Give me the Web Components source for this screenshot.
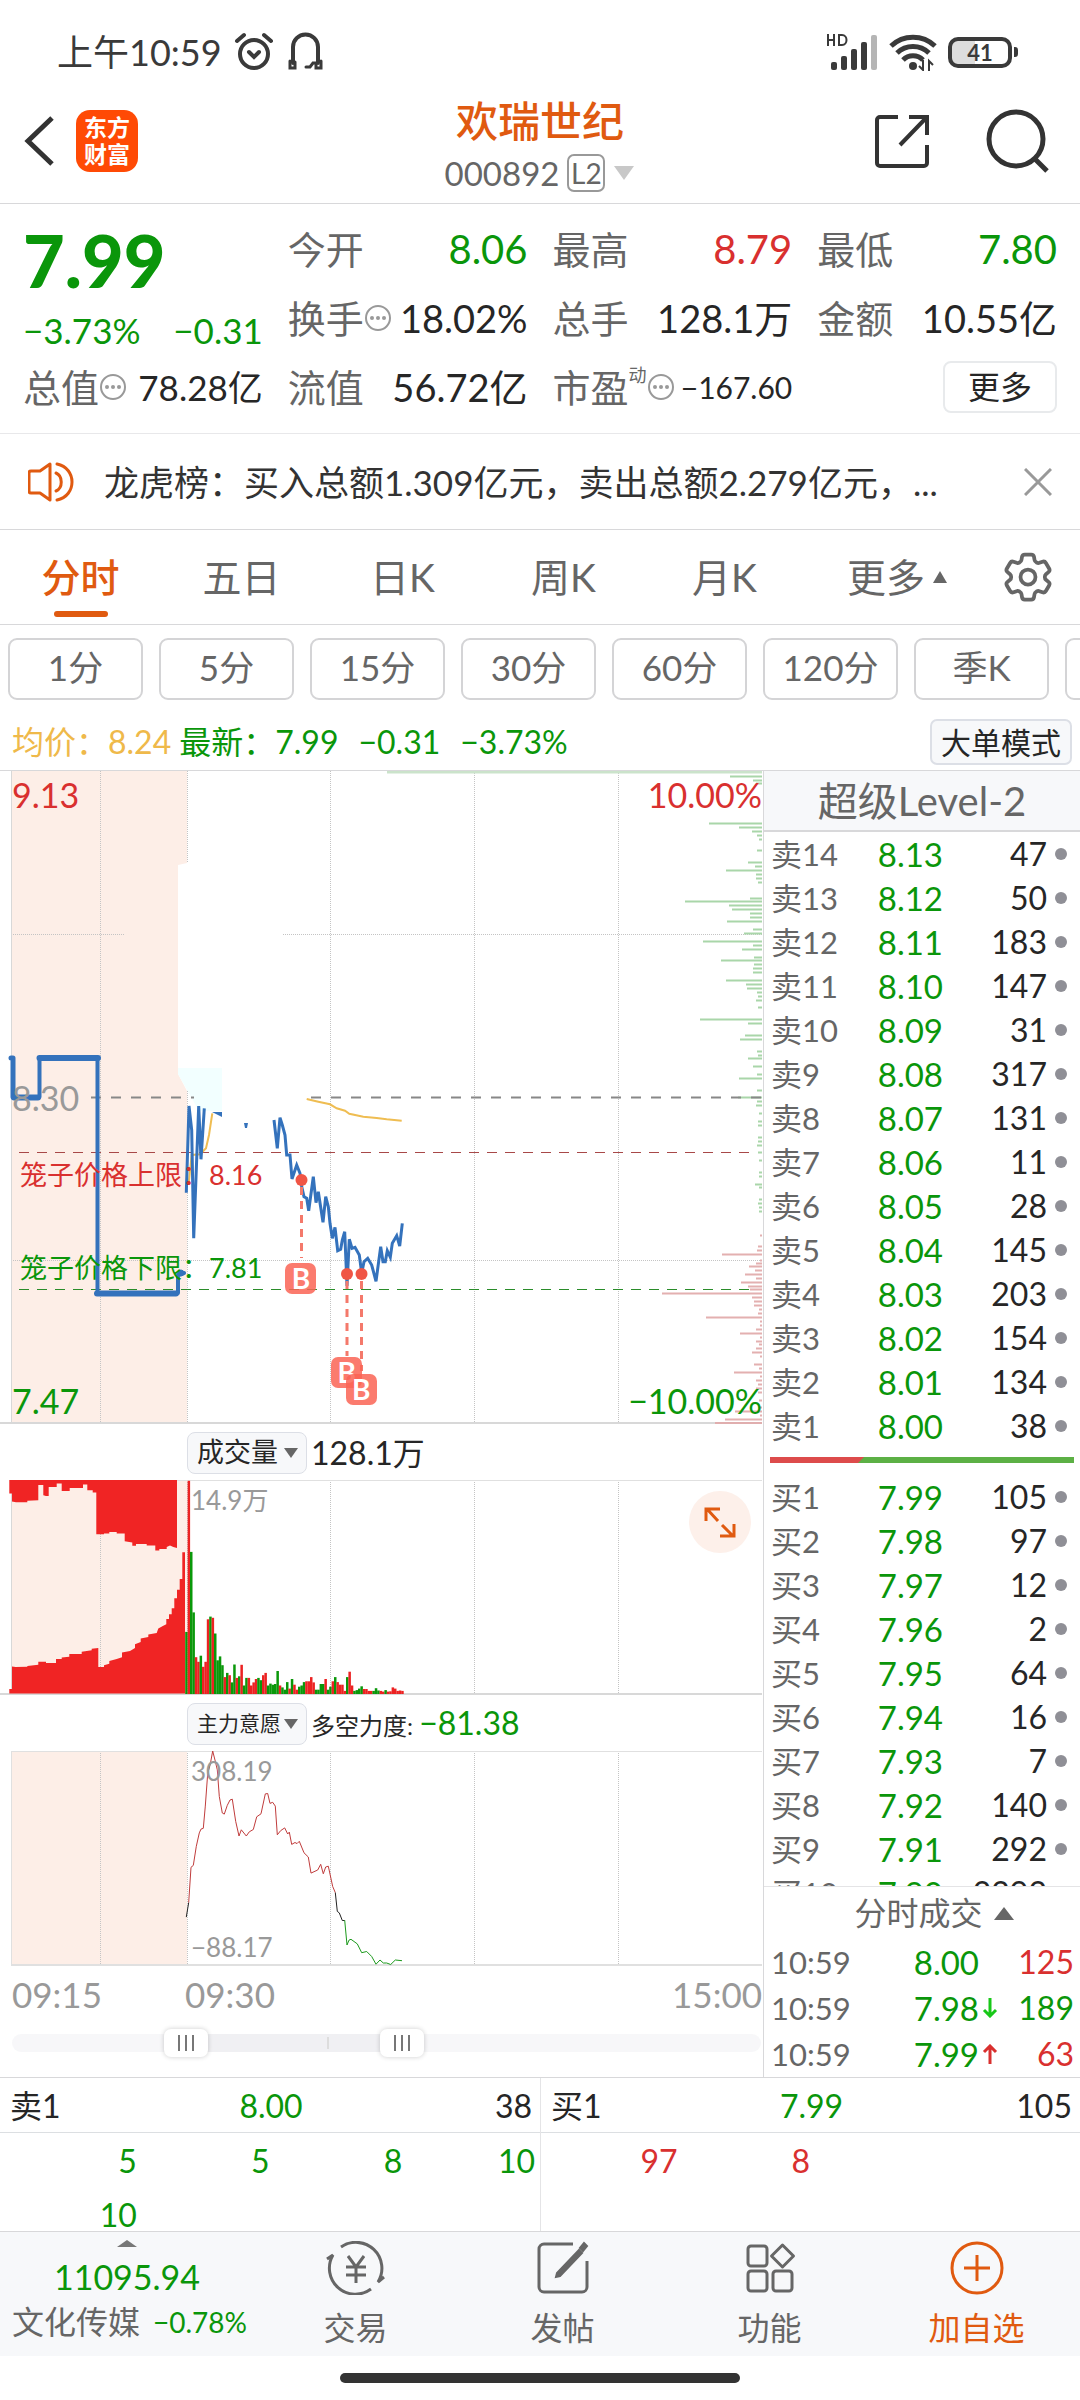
<!DOCTYPE html>
<html lang="zh-CN">
<head>
<meta charset="utf-8">
<meta name="viewport" content="width=device-width, initial-scale=1">
<title>欢瑞世纪 000892</title>
<style>
  :root {
    --green: #0a960a;
    --red: #d9302f;
    --orange: #e05a10;
    --text: #262626;
    --gray: #666;
    --light: #999;
    --line: #d8d8da;
    --panel: #f7f8fa;
  }
  body {
    margin: 0;
    background: #fff;
    color: var(--text);
    font-family: Lato, "Noto Sans CJK SC", sans-serif;
    font-size: 32px;
    line-height: 44px;
  }
</style>
</head>
<body>
<stock-page></stock-page>

<script>
const BASE_CSS = `
  * { box-sizing: border-box; }
  :host { display: block; }
  button, select { font: inherit; color: inherit; background: none; border: 0; margin: 0; padding: 0; }
  a { color: inherit; text-decoration: none; }
  svg { display: block; }
  table { border-collapse: collapse; width: 100%; }
  td, th { padding: 0; font-weight: normal; }
  .green { color: var(--green); }
  .red { color: var(--red); }
`;

class BaseElement extends HTMLElement {
  constructor() {
    super();
    this.attachShadow({ mode: "open" });
    this.shadowRoot.innerHTML = `<style>${BASE_CSS}${this.css()}</style>${this.html()}`;
  }
  css() {
    return "";
  }
  html() {
    return "<slot></slot>";
  }
}

// Points are stored in drawing units and scaled into the panel.
const toPoints = (data, sx, sy, oy) =>
  data
    .trim()
    .split(/\s+/)
    .map((p) => p.split(",").map(Number))
    .map(([x, y]) => `${(x * sx).toFixed(1)},${(y * sy + oy).toFixed(1)}`)
    .join(" ");

customElements.define("status-bar", class extends BaseElement {
  css() {
    return `
      :host { display: flex; align-items: center; height: 80px; padding: 24px 62px 0 57px; color: #3a3a3a; font-size: 36px; }
      .left, .right { display: flex; align-items: center; }
      .left { gap: 12px; flex: 1; }
      .right { gap: 11px; }
      .battery { display: flex; align-items: center; gap: 2px; }
      .cell { width: 64px; height: 31px; border: 4px solid #3a3a3a; border-radius: 10px; font-size: 22px; line-height: 24px; text-align: center; font-weight: bold;
        background: linear-gradient(90deg, #ddd 41%, #fff 41%); }
      .tip { width: 4px; height: 10px; border-radius: 0 3px 3px 0; background: #3a3a3a; }
    `;
  }
  html() {
    return `
      <div class="left">
        <span>上午10:59</span>
        <svg width="40" height="40" viewBox="0 0 40 40" fill="none" stroke="currentColor" stroke-width="4" stroke-linecap="round">
          <circle cx="20" cy="22" r="14"/><path d="M3 9l7-6M37 9l-7-6"/><path d="M15 20l5 5 5-5"/>
        </svg>
        <svg width="40" height="40" viewBox="0 0 40 40" fill="none" stroke="currentColor" stroke-width="4" stroke-linecap="round">
          <path d="M7 31V15a12 12 0 0 1 25 0v16"/><path d="M4 29v7h5v-6M35 29v7h-5v-5h-3l-3 4h-4" stroke-width="3"/>
        </svg>
      </div>
      <div class="right">
        <svg width="52" height="38" viewBox="0 0 52 38">
          <g fill="none" stroke="#3a3a3a" stroke-width="2"><path d="M2 1v12M8 1v12M2 7h6M13 2v10h3c6 0 6-10 0-10z"/></g>
          <g fill="#3a3a3a"><rect x="5" y="29" width="6" height="8" rx="2"/><rect x="15" y="23" width="6" height="14" rx="2"/><rect x="25" y="16" width="6" height="21" rx="2"/><rect x="35" y="9" width="6" height="28" rx="2"/></g>
          <rect x="45" y="2" width="6" height="35" rx="2" fill="#b5b5b5"/>
        </svg>
        <svg width="48" height="38" viewBox="0 0 48 38" fill="none" stroke="#3a3a3a" stroke-width="5">
          <path d="M2 13a32 32 0 0 1 44 0"/><path d="M8 20a23 23 0 0 1 32 0"/><path d="M14 27a14 14 0 0 1 20 0"/>
          <circle cx="24" cy="33" r="4" fill="#3a3a3a" stroke="none"/>
          <path d="M34 27v10l-4-4M40 38V28l4 4" stroke-width="2"/>
        </svg>
        <div class="battery"><div class="cell">41</div><div class="tip"></div></div>
      </div>`;
  }
});

customElements.define("stock-header", class extends BaseElement {
  css() {
    return `
      :host { display: grid; grid-template-columns: 1fr auto 1fr; height: 124px; padding-top: 13px; border-bottom: 1px solid var(--line); }
      .side { display: flex; align-items: center; height: 96px; }
      .left { gap: 18px; padding-left: 20px; }
      .end { justify-content: flex-end; gap: 56px; padding-right: 30px; color: #333; }
      .logo { width: 62px; height: 62px; border-radius: 14px; background: #ff4a05; color: #fff; font-size: 23px; font-weight: bold; line-height: 27px; text-align: center; padding: 4px 0; }
      .mid { text-align: center; }
      h1 { margin: 0; font-size: 42px; line-height: 56px; font-weight: 500; color: var(--orange); }
      .code { display: flex; align-items: center; justify-content: center; gap: 8px; height: 48px; color: var(--gray); font-size: 33px; }
      .l2 { border: 2px solid #999; border-radius: 7px; width: 38px; height: 38px; font-size: 28px; line-height: 34px; }
    `;
  }
  html() {
    return `
      <div class="side left">
        <button aria-label="返回"><svg width="38" height="54" viewBox="0 0 38 54" fill="none" stroke="#333" stroke-width="5"><path d="M32 4L8 27l24 23"/></svg></button>
        <div class="logo">东方<br>财富</div>
      </div>
      <div class="mid">
        <h1>欢瑞世纪</h1>
        <div class="code"><span>000892</span><span class="l2">L2</span>
          <svg width="22" height="14" viewBox="0 0 22 14"><path d="M1 0h20L11 14z" fill="#c8c8c8"/></svg></div>
      </div>
      <div class="side end">
        <button aria-label="分享"><svg width="56" height="56" viewBox="0 0 56 56" fill="none" stroke="currentColor" stroke-width="4"><path d="M24 4H6a3 3 0 0 0-3 3v43a3 3 0 0 0 3 3h44a3 3 0 0 0 3-3V32"/><path d="M26 32L53 4M35 4h18v18"/></svg></button>
        <button aria-label="搜索"><svg width="64" height="64" viewBox="0 0 64 64" fill="none" stroke="currentColor" stroke-width="5"><circle cx="30" cy="30" r="27"/><path d="M49 50l12 12"/></svg></button>
      </div>`;
  }
});

const DOTS = `<svg width="28" height="28" viewBox="0 0 28 28" fill="none" stroke="#999" stroke-width="2"><circle cx="14" cy="14" r="12"/><g fill="#999" stroke="none"><circle cx="8" cy="14" r="2"/><circle cx="14" cy="14" r="2"/><circle cx="20" cy="14" r="2"/></g></svg>`;

customElements.define("quote-field", class extends BaseElement {
  css() {
    return `
      :host { display: flex; align-items: center; justify-content: space-between; height: 69px; white-space: nowrap; }
      .label { display: flex; align-items: center; color: var(--gray); font-size: 38px; }
      sup { font-size: 18px; line-height: 20px; align-self: flex-start; }
      .value { font-size: 40px; }
      :host([size="m"]) .value { font-size: 38px; }
      :host([size="s"]) .value { font-size: 35px; }
      :host([size="xs"]) .value { font-size: 30px; }
    `;
  }
  html() {
    const tone = this.getAttribute("tone") || "";
    const sup = this.getAttribute("sup");
    return `
      <span class="label">${this.getAttribute("label")}${sup ? `<sup>${sup}</sup>` : ""}${this.hasAttribute("info") ? DOTS : ""}</span>
      <span class="value ${tone}"><slot></slot></span>`;
  }
});

customElements.define("quote-summary", class extends BaseElement {
  css() {
    return `
      :host { display: grid; grid-template-columns: repeat(4, 1fr); column-gap: 25px; height: 230px; padding: 10px 23px 12px; border-bottom: 1px solid #e8e8ea; align-content: start; }
      .price { grid-row: span 2; height: 138px; color: var(--green); }
      .price strong { display: block; font-size: 72px; line-height: 72px; padding-top: 10px; font-weight: 900; }
      .change { display: flex; justify-content: space-between; font-size: 35px; line-height: 68px; }
      .more { display: flex; align-items: center; justify-content: flex-end; }
      .more button { width: 114px; height: 52px; border: 2px solid #e8eaec; border-radius: 8px; line-height: 44px; }
    `;
  }
  html() {
    return `
      <div class="price"><strong>7.99</strong><div class="change"><span>−3.73%</span><span>−0.31</span></div></div>
      <quote-field label="今开" tone="green">8.06</quote-field>
      <quote-field label="最高" tone="red">8.79</quote-field>
      <quote-field label="最低" tone="green">7.80</quote-field>
      <quote-field label="换手" info size="m">18.02%</quote-field>
      <quote-field label="总手" size="m">128.1万</quote-field>
      <quote-field label="金额" size="m">10.55亿</quote-field>
      <quote-field label="总值" info size="s">78.28亿</quote-field>
      <quote-field label="流值" size="m">56.72亿</quote-field>
      <quote-field label="市盈" sup="动" info size="xs">−167.60</quote-field>
      <div class="more"><button>更多</button></div>`;
  }
});

customElements.define("notice-bar", class extends BaseElement {
  css() {
    return `
      :host { display: flex; align-items: center; height: 96px; padding: 0 28px; border-bottom: 1px solid var(--line); font-size: 35px; color: #333; }
      .text { flex: 1; padding-left: 28px; white-space: nowrap; overflow: hidden; }
    `;
  }
  html() {
    return `
      <svg width="48" height="42" viewBox="0 0 48 42" fill="none" stroke="#e05a10" stroke-width="3" stroke-linejoin="round"><path d="M22 3v36l-10-7H3a2 2 0 0 1-2-2V12a2 2 0 0 1 2-2h9z"/><path d="M28 12c7 3 7 15 0 18M29 3c20 4 20 32 0 36" stroke-linecap="round"/></svg>
      <div class="text"><slot></slot></div>
      <button aria-label="关闭"><svg width="28" height="28" viewBox="0 0 28 28" stroke="#999" stroke-width="3"><path d="M1 1l26 26M27 1L1 27"/></svg></button>`;
  }
});

customElements.define("period-tabs", class extends BaseElement {
  css() {
    return `
      :host { display: grid; grid-template-columns: repeat(5, 161fr) 170fr 105fr; height: 95px; border-bottom: 1px solid var(--line); color: var(--gray); }
      button { display: flex; align-items: center; justify-content: center; gap: 8px; font-size: 39px; position: relative; }
      button.more { padding-left: 14px; }
      button[aria-selected] { color: var(--orange); font-weight: 500; }
      button[aria-selected]::after { content: ""; position: absolute; bottom: 7px; left: calc(50% - 27px); width: 54px; height: 6px; border-radius: 3px; background: var(--orange); }
    `;
  }
  html() {
    const tabs = ["分时", "五日", "日K", "周K", "月K"];
    return `
      ${tabs.map((t, i) => `<button ${i ? "" : 'aria-selected="true"'}>${t}</button>`).join("")}
      <button class="more">更多<svg width="14" height="12" viewBox="0 0 14 12"><path d="M7 0l7 12H0z" fill="#666"/></svg></button>
      <button aria-label="设置"><svg width="60" height="60" viewBox="0 0 24 24" fill="none" stroke="#666" stroke-width="1.5"><path d="M9.594 3.94c.09-.542.56-.94 1.11-.94h2.593c.55 0 1.02.398 1.11.94l.213 1.281c.063.374.313.686.645.87.074.04.147.083.22.127.325.196.72.257 1.075.124l1.217-.456a1.125 1.125 0 0 1 1.37.49l1.296 2.247a1.125 1.125 0 0 1-.26 1.431l-1.003.827c-.293.241-.438.613-.43.992a7.723 7.723 0 0 1 0 .255c-.008.378.137.75.43.991l1.004.827c.424.35.534.955.26 1.43l-1.298 2.247a1.125 1.125 0 0 1-1.369.491l-1.217-.456c-.355-.133-.75-.072-1.076.124a6.47 6.47 0 0 1-.22.128c-.331.183-.581.495-.644.869l-.213 1.281c-.09.543-.56.94-1.11.94h-2.594c-.55 0-1.019-.398-1.11-.94l-.213-1.281c-.062-.374-.312-.686-.644-.87a6.52 6.52 0 0 1-.22-.127c-.325-.196-.72-.257-1.076-.124l-1.217.456a1.125 1.125 0 0 1-1.369-.49l-1.297-2.247a1.125 1.125 0 0 1 .26-1.431l1.004-.827c.292-.24.437-.613.43-.991a6.932 6.932 0 0 1 0-.255c.007-.38-.138-.751-.43-.992l-1.004-.827a1.125 1.125 0 0 1-.26-1.43l1.297-2.247a1.125 1.125 0 0 1 1.37-.491l1.216.456c.356.133.751.072 1.076-.124.072-.044.146-.086.22-.128.332-.183.582-.495.644-.869l.214-1.28Z"/><circle cx="12" cy="12" r="3"/></svg></button>`;
  }
});

customElements.define("minute-chips", class extends BaseElement {
  css() {
    return `
      :host { display: flex; gap: 16px; padding: 13px 0 0 8px; overflow: hidden; color: var(--gray); }
      button { flex: none; width: 135px; height: 62px; border: 2px solid #d4d4d6; border-radius: 9px; padding-bottom: 3px; font-size: 35px; line-height: 55px; white-space: nowrap; }
    `;
  }
  html() {
    return ["1分", "5分", "15分", "30分", "60分", "120分", "季K", "年K"].map((t) => `<button>${t}</button>`).join("");
  }
});

customElements.define("chart-legend", class extends BaseElement {
  css() {
    return `
      :host { display: flex; align-items: center; height: 70px; padding: 14px 8px 0 12px; white-space: nowrap; }
      .avg { color: #efb94a; margin-right: 8px; }
      .last { display: flex; gap: 20px; color: var(--green); flex: 1; }
      button { width: 142px; height: 46px; border: 2px solid #dcdfe6; border-radius: 7px; background: var(--panel); font-size: 30px; line-height: 40px; }
    `;
  }
  html() {
    return `
      <span class="avg">均价：8.24</span>
      <span class="last"><span>最新：7.99</span><span>−0.31</span><span>−3.73%</span></span>
      <button>大单模式</button>`;
  }
});

const GRID_X = [330.5, 474.5, 618.5];

// Depth profile at the right edge: "y,left" pairs.
const DEPTH_SELL = `776,730 780,753 783,756 823,709 827,739 831,752 835,757 839,759 850,757 862,748 866,755 870,726 874,756 878,756 882,758
  898,750 901,685 905,729 909,732 913,750 917,750 921,727 929,753 933,744 941,703 945,753 949,742 957,754 960,721 964,754 968,753 972,753
  980,726 984,746 988,747 992,757 996,758 1000,756 1007,758 1019,700 1023,748 1035,745 1039,740 1051,757 1055,758 1058,748 1066,753 1074,757
  1078,739 1090,757 1097,738 1101,757 1105,756 1113,759 1121,758 1125,758 1137,758 1141,758 1145,757 1152,758 1160,759 1172,759 1176,759
  1184,755 1187,759 1199,759 1203,758 1207,759 1211,759`;
const DEPTH_BUY = `1235,760 1246,758 1250,757 1254,722 1260,760 1263,756 1266,749 1270,755 1274,745 1278,756 1282,741 1286,748 1289,750 1293,662
  1297,752 1301,754 1305,754 1309,759 1313,758 1317,706 1321,760 1325,760 1329,756 1333,740 1337,760 1341,756 1344,759 1348,756 1352,752
  1356,760 1364,754 1368,759 1372,734 1376,760 1380,756 1384,758 1388,756 1392,758 1400,759 1407,758 1411,735 1415,760 1419,725`;

const depthLines = (data) =>
  data.trim().split(/\s+/).map((p) => p.split(",")).map(([y, x]) => `M${x} ${y - 770.5}H762`).join("");

const PRICE = `822,240 832,325 840,233 847,255 855,285 860,345 870,345 876,417 890,375 900,400 905,440 912,470 920,475 926,512 940,410 948,488 955,455
  969,547 977,470 985,500 990,550 997,595 1005,562 1013,632 1022,628 1027,600 1034,575 1041,738 1048,598 1056,625 1065,622 1078,645 1085,700
  1092,665 1103,655 1115,675 1128,724 1142,620 1149,665 1156,665 1162,632 1171,652 1177,610 1190,587 1199,618 1207,550`;

customElements.define("price-chart", class extends BaseElement {
  css() {
    return `
      :host { position: relative; height: 653px; }
      svg { width: 100%; height: 100%; }
      span { position: absolute; font-size: 34px; line-height: 40px; }
      .l { left: 12px; }
      .r { right: 1px; }
      .top { top: 4px; }
      .bottom { bottom: 3px; }
      .mid { top: 307px; color: var(--light); }
      .cage { left: 20px; font-size: 27px; white-space: nowrap; }
      .up { top: 384px; }
      .down { top: 477px; }
      .mark { width: 31px; height: 31px; border-radius: 7px; background: rgba(250, 100, 85, 0.85); color: #fff; font-size: 28px; line-height: 31px; font-weight: bold; text-align: center; }
    `;
  }
  html() {
    return `
      <svg viewBox="0 0 763 653" preserveAspectRatio="none" fill="none">
        <path d="M11 0H187V92L178 94V303L187 320V652H11z" fill="#fdeee7"/>
        <path d="M178 297H222V340H199L178 303z" fill="#f2ffff"/>
        <path d="M100.500 0V652M187.500 0V92M187.500 320V652${GRID_X.map((x) => `M${x} 0V652`).join("")}M11 163.500H125M283 163.500H762M11 489.500H762" stroke="#c4c4c4" stroke-dasharray="1 1"/>
        <path d="M11.500 0V652" stroke="#d8d8d8"/>
        <path d="M0 652H762" stroke="#d8d8d8" stroke-width="2"/>
        <path d="M387 1H762" stroke="#cbe3cb" stroke-width="3"/>
        <path d="${depthLines(DEPTH_SELL)}" stroke="#a9d6a9" stroke-width="2"/>
        <path d="${depthLines(DEPTH_BUY)}" stroke="#e3b0b0" stroke-width="2"/>
        <path d="M715 652H762" stroke="#e0aeae" stroke-width="2"/>
        <path d="M91 326.500H194M311 326.500H762" stroke="#888" stroke-width="2" stroke-dasharray="10 10"/>
        <path d="M19 381.500H750" stroke="#a84848" stroke-width="1" stroke-dasharray="10 8"/>
        <path d="M19 518.500H750" stroke="#2a8c2a" stroke-width="1" stroke-dasharray="10 8"/>
        <g stroke="#efbd52" stroke-width="2">
          <polyline points="${toPoints("566,430 575,345 600,343 618,325 627,285 637,220", 1 / 3, 1 / 3, 269)}"/>
          <polyline points="${toPoints("920,177 955,185 990,193 1010,205 1035,212 1048,221 1090,230 1130,234 1160,238 1205,242", 1 / 3, 1 / 3, 269)}"/>
        </g>
        <g stroke="#3472bc" stroke-linejoin="round" stroke-linecap="round">
          <path d="M11 287h2v39" stroke-width="5"/>
          <path d="M14 326.500H38M39.500 287H98M97 522.500H176" stroke-width="6"/>
          <path d="M39.500 326V287M97.500 287V522M178 522V504L184 502" stroke-width="4"/>
          <circle cx="181" cy="502" r="3" fill="#3472bc"/>
        </g>
        <g stroke="#3472bc" stroke-width="3">
          <polyline points="${toPoints("559,458 567,198 575,270 581,595 596,198 603,358 613,205", 1 / 3, 1 / 3, 269)}"/>
          <polyline points="${toPoints(PRICE, 1 / 3, 1 / 3, 269)}"/>
          <path d="M212 341H222V346zM244 352h4l-1 5h-2z" fill="#3472bc" stroke="none"/>
        </g>
        <path d="M301.500 416V487M347 510V585M361.500 510V600" stroke="#f4796b" stroke-width="3" stroke-dasharray="8 6"/>
        <g fill="#f05545"><circle cx="301.500" cy="409" r="6"/><circle cx="347" cy="503" r="6"/><circle cx="361.500" cy="503" r="6"/></g>
      </svg>
      <span class="l top red">9.13</span><span class="r top red">10.00%</span>
      <span class="l mid">8.30</span>
      <span class="l bottom green">7.47</span><span class="r bottom green">−10.00%</span>
      <span class="cage up red">笼子价格上限：8.16</span>
      <span class="cage down green">笼子价格下限：7.81</span>
      <span class="mark" style="left: 37.4%; top: 492px">B</span>
      <span class="mark" style="left: 43.4%; top: 586px">B</span>
      <span class="mark" style="left: 45.3%; top: 603px">B</span>`;
  }
});

customElements.define("indicator-head", class extends BaseElement {
  css() {
    return `
      :host { display: flex; align-items: center; height: 56px; padding: 2px 0 0 187px; gap: 4px; white-space: nowrap; }
      label { display: block; position: relative; width: 120px; height: 42px; border: 1px solid #dcdfe6; border-radius: 8px; background: var(--panel); }
      label::after { content: ""; position: absolute; right: 8px; top: 15px; border: 7px solid transparent; border-top: 10px solid #666; border-bottom: 0; pointer-events: none; }
      select { display: block; appearance: none; width: 100%; height: 38px; padding-left: 9px; font-size: 27px; line-height: 38px; outline: none; }
      :host([narrow]) select { font-size: 21px; }
    `;
  }
  html() {
    return `<label><select aria-label="指标"><option>${this.getAttribute("name")}</option></select></label><slot></slot>`;
  }
});

const PRE_TOP = `28,157 28,192 36,192 36,213 48,215 82,215 82,211 115,210 115,170 130,170 130,197 138,199 146,199 146,175 170,175 170,166 185,166 185,186 209,186
  209,178 249,178 249,169 262,169 262,184 278,184 278,190 289,190 289,299 312,299 312,297 328,297 328,293 350,293 350,297 374,297 374,317 397,320 397,329
  408,329 408,324 440,324 440,328 466,328 466,341 478,341 478,337 500,337 500,332 510,328 520,332 531,335 531,157`;
const PRE_BOTTOM = `28,715 28,703 36,703 36,644 47,646 82,645 82,643 115,640 115,632 138,632 138,635 168,635 168,625 185,625 185,621 208,619 208,612 245,612 245,606
  275,602 275,598 295,596 295,646 312,646 312,641 328,637 328,630 350,625 366,620 366,608 390,604 405,596 405,586 422,580 422,571 445,567 445,561 470,557 475,545
  490,538 499,534 499,520 507,520 507,508 515,508 515,492 523,492 523,466 531,466 531,444 539,444 539,416 547,416 547,346 555,346 555,715`;
// One bar per minute from 09:30: colour letter and top edge.
const VOLUME = `g554 r159 g345 g503 r620 r632 g616 r645 r632 r521 g514 r517 g558 g628 g618 g641 r672 g661 r667 g686 g639 r674 g670 r640 g694 g674 r674 r694
  r686 r677 g674 g680 r667 r661 g694 g689 g692 g690 g656 r694 g699 g705 g685 r702 g677 r692 r705 g697 g694 g685 r683 r683 r672 r686 g705 g705 g690 g690
  r677 g705 g697 r683 g672 r685 r692 r692 r708 g672 r658 r694 g708 g706 g702 g696 r703 r703 r708 r708 g708 g701 g707 r708 r710 g706 r710 r709 r699 r702 r708 r707 r708`;

customElements.define("volume-chart", class extends BaseElement {
  css() {
    return `
      :host { position: relative; height: 215px; }
      svg.plot { width: 100%; height: 100%; }
      span { position: absolute; left: 191px; top: 2px; font-size: 26px; line-height: 36px; color: var(--light); }
      button { position: absolute; right: 12px; top: 11px; width: 62px; height: 62px; border-radius: 50%; background: #fdf0ea; display: grid; place-items: center; }
    `;
  }
  html() {
    const k = 1 / 2.613;
    const bars = VOLUME.trim().split(/\s+/).map((b, i) => {
      const y = (b.slice(1) - 157) * k;
      return `<rect x="${(185.2 + i * 2.4).toFixed(1)}" y="${y.toFixed(1)}" width="2.500" height="${(214 - y).toFixed(1)}" fill="${b[0] === "r" ? "#ec2222" : "#0a980a"}"/>`;
    }).join("");
    return `
      <svg class="plot" viewBox="0 0 763 215" preserveAspectRatio="none" fill="none">
        <rect x="11" width="176" height="214" fill="#fdeee7"/>
        <path d="M100.500 0V214M187.500 0V214${GRID_X.map((x) => `M${x} 0V214`).join("")}" stroke="#c4c4c4" stroke-dasharray="1 1"/>
        <path d="M11 .5H762" stroke="#e0e0e0"/>
        <path d="M11.500 0V214" stroke="#d8d8d8"/>
        <path d="M0 214H762" stroke="#d8d8d8" stroke-width="2"/>
        <g fill="#f02424">
          <polygon points="${toPoints(PRE_TOP, 1 / 3, k, -157 * k)}"/>
          <polygon points="${toPoints(PRE_BOTTOM, 1 / 3, k, -157 * k)}"/>
        </g>
        ${bars}
      </svg>
      <span>14.9万</span>
      <button aria-label="全屏"><svg width="32" height="32" viewBox="0 0 32 32" fill="none" stroke="#e05a10" stroke-width="3"><path d="M2 15V3h14M3 3l11 12M30 18v12H16M29 30L18 19"/></svg></button>`;
  }
});

const FORCE_UP = `566,1262 573,1170 580,1165 589,1115 598,1080 603,1070 610,1068 616,1010 623,925 631,900 638,866 646,893 652,915 658,985 667,1028 673,1031 682,1008 690,994 697,992
  707,1050 717,1088 724,1072 739,1088 748,1077 760,1071 770,1038 783,1030 796,978 803,977 810,1003 818,1000 826,1010 832,1085 842,1074 854,1067 863,1083 868,1078 875,1110
  885,1105 891,1108 898,1102 912,1132 925,1143 933,1185 953,1177 962,1162 970,1187 977,1169 985,1167 998,1220 1006,1236`;
const FORCE_DOWN = `1034,1308 1041,1373 1047,1360 1053,1358 1072,1370 1085,1393 1100,1390 1115,1403 1128,1423 1140,1412 1150,1420 1160,1420 1172,1424 1186,1412 1206,1414`;

customElements.define("force-chart", class extends BaseElement {
  css() {
    return `
      :host { position: relative; height: 215px; }
      svg { width: 100%; height: 100%; }
      span { position: absolute; left: 191px; font-size: 26px; line-height: 36px; color: var(--light); }
      .max { top: 2px; }
      .min { bottom: 1px; }
    `;
  }
  html() {
    const k = 1 / 2.613;
    const line = (data, color) => `<polyline points="${toPoints(data, 1 / 3, k, -866 * k)}" stroke="${color}"/>`;
    return `
      <span class="max">308.19</span><span class="min">−88.17</span>
      <svg viewBox="0 0 763 215" preserveAspectRatio="none" fill="none">
        <rect x="11" width="176" height="214" fill="#fdeee7"/>
        <path d="M100.500 0V214M187.500 0V214${GRID_X.map((x) => `M${x} 0V214`).join("")}" stroke="#c4c4c4" stroke-dasharray="1 1"/>
        <path d="M11 .5H762M11.500 0V214" stroke="#e0e0e0"/>
        <path d="M11 214H762" stroke="#e0e0e0" stroke-width="2"/>
        ${line("559,1300 566,1262", "#222")}
        ${line(FORCE_UP, "#c03c3c")}
        ${line("1006,1236 1012,1285 1018,1289 1027,1309 1034,1309", "#222")}
        ${line(FORCE_DOWN, "#1c9a1c")}
      </svg>`;
  }
});

customElements.define("time-range", class extends BaseElement {
  css() {
    return `
      .times { display: grid; grid-template-columns: 173px 1fr auto; padding: 0 1px 0 12px; font-size: 35px; line-height: 56px; color: var(--light); }
      .scrub { display: grid; align-items: center; height: 30px; margin: 6px 2px 19px 12px; }
      .scrub > * { grid-area: 1 / 1; }
      .track { height: 18px; border-radius: 9px; background: linear-gradient(90deg, #f7f7f9 23%, #f0f0f3 23%, #f0f0f3 52%, #f7f7f9 52%); display: flex; align-items: center; }
      .track::after { content: ""; width: 2px; height: 12px; margin-left: 42%; background: #ddd; }
      input { appearance: none; width: 100%; height: 30px; margin: 0; background: none; pointer-events: none; }
      input::-webkit-slider-thumb { appearance: none; pointer-events: auto; width: 44px; height: 28px; border-radius: 7px; box-shadow: 0 0 5px rgba(0, 0, 0, 0.2);
        background: linear-gradient(90deg, #777 2px, transparent 2px 7px, #777 7px 9px, transparent 9px 14px, #777 14px 16px) 14px 6px / 16px 16px no-repeat #fff; }
    `;
  }
  html() {
    return `
      <div class="times"><span>09:15</span><span>09:30</span><span>15:00</span></div>
      <div class="scrub">
        <div class="track"></div>
        <input type="range" min="0" max="1000" value="216" aria-label="开始时间">
        <input type="range" min="0" max="1000" value="522" aria-label="结束时间">
      </div>`;
  }
});

const SELLS = [[14, "8.13", 47], [13, "8.12", 50], [12, "8.11", 183], [11, "8.10", 147], [10, "8.09", 31], [9, "8.08", 317], [8, "8.07", 131],
  [7, "8.06", 11], [6, "8.05", 28], [5, "8.04", 145], [4, "8.03", 203], [3, "8.02", 154], [2, "8.01", 134], [1, "8.00", 38]];
const BUYS = [[1, "7.99", 105], [2, "7.98", 97], [3, "7.97", 12], [4, "7.96", 2], [5, "7.95", 64], [6, "7.94", 16], [7, "7.93", 7],
  [8, "7.92", 140], [9, "7.91", 292], [10, "7.90", 2292]];

customElements.define("order-book", class extends BaseElement {
  css() {
    return `
      :host { display: flex; flex-direction: column; border-left: 1px solid var(--line); min-width: 0; }
      h2 { margin: 0; height: 61px; background: var(--panel); border-bottom: 2px solid var(--line); color: var(--gray); font-size: 40px; line-height: 60px; font-weight: normal; text-align: center; }
      table { table-layout: fixed; }
      tr { height: 44px; }
      th { text-align: left; padding-left: 7px; color: var(--gray); width: 90px; white-space: nowrap; font-size: 31px; }
      td { text-align: right; line-height: 44px; }
      td.price { width: 89px; font-size: 33px; }
      td.dot { width: 33px; }
      td.dot::before { content: ""; display: block; width: 12px; height: 12px; margin-left: 8px; border-radius: 50%; background: #8f8f96; }
      .ratio { flex: none; height: 6px; margin: 9px 6px 12px; background: linear-gradient(135deg, #dd4b4b 66px, #5cb045 67px); }
      .buys { flex: 1 1 0; min-height: 0; overflow: hidden; }
      .deals h3 { margin: 0; height: 53px; padding-left: 24px; border-top: 1px solid #e4e4e6; color: var(--gray); font-size: 32px; line-height: 52px; font-weight: normal; display: flex; justify-content: center; align-items: center; gap: 8px; }
      .deals tr { height: 46px; }
      .deals td.price { width: 125px; }
      .deals td:last-child { padding-right: 6px; }
      .deals td.arrow { width: 20px; }
      .deals svg { margin-left: 3px; }
    `;
  }
  html() {
    const rows = (side, list) =>
      list.map(([n, price, qty]) => `<tr><th scope="row">${side}${n}</th><td class="price green">${price}</td><td>${qty}</td><td class="dot"></td></tr>`).join("");
    const down = `<svg width="16" height="20" viewBox="0 0 16 20" fill="none" stroke="#18c818" stroke-width="3"><path d="M8 0v18M2 12l6 6 6-6"/></svg>`;
    const up = `<svg width="16" height="20" viewBox="0 0 16 20" fill="none" stroke="#d9302f" stroke-width="3"><path d="M8 20V2M2 8l6-6 6 6"/></svg>`;
    const deal = (price, arrow, qty, tone) =>
      `<tr><th scope="row">10:59</th><td class="price green">${price}</td><td class="arrow">${arrow}</td><td class="${tone}">${qty}</td></tr>`;
    return `
      <h2>超级Level-2</h2>
      <table>${rows("卖", SELLS)}</table>
      <div class="ratio"></div>
      <div class="buys"><table>${rows("买", BUYS)}</table></div>
      <div class="deals">
        <h3>分时成交<svg width="20" height="13" viewBox="0 0 20 13"><path d="M10 0l10 13H0z" fill="#666"/></svg></h3>
        <table>${deal("8.00", "", 125, "red")}${deal("7.98", down, 189, "green")}${deal("7.99", up, 63, "red")}</table>
      </div>`;
  }
});

customElements.define("queue-side", class extends BaseElement {
  css() {
    return `
      .head { display: grid; grid-template-columns: 1fr auto 1fr; height: 55px; padding: 0 8px 0 10px; line-height: 56px; border-bottom: 1px solid #dcdfe2; }
      .head span:last-child { text-align: right; }
      .lots { display: grid; grid-template-columns: repeat(4, 1fr); height: 98px; padding: 1px 5px 0 4px; overflow: hidden; line-height: 54px; text-align: right; }
    `;
  }
  html() {
    const lots = this.getAttribute("lots").split(",");
    return `
      <div class="head"><span>${this.getAttribute("name")}</span><span class="green">${this.getAttribute("price")}</span><span>${this.getAttribute("qty")}</span></div>
      <div class="lots ${this.getAttribute("tone")}">${lots.map((n) => `<span>${n}</span>`).join("")}</div>`;
  }
});

customElements.define("bottom-nav", class extends BaseElement {
  css() {
    return `
      :host { display: grid; grid-template-columns: 252fr repeat(4, 207fr); height: 124px; background: var(--panel); color: var(--gray); }
      .index { padding: 8px 0 0 12px; white-space: nowrap; }
      .index svg { margin: 0 0 8px 105px; }
      .index b { display: block; width: 230px; text-align: center; font-size: 34px; line-height: 44px; font-weight: normal; }
      .index p { margin: 0; display: flex; gap: 13px; line-height: 46px; }
      .index p span { font-size: 28px; }
      a { display: flex; flex-direction: column; align-items: center; padding-top: 9px; }
      a > span { line-height: 62px; padding-top: 2px; }
      .add { color: var(--orange); }
      svg { fill: none; stroke: currentColor; stroke-width: 3; }
    `;
  }
  html() {
    const icon = (body) => `<svg width="60" height="54" viewBox="0 0 60 54">${body}</svg>`;
    return `
      <div class="index">
        <svg width="20" height="7" viewBox="0 0 20 7"><path d="M10 0l10 7H0z" fill="#777" stroke="none"/></svg>
        <b class="green">11095.94</b>
        <p>文化传媒<span class="green">−0.78%</span></p>
      </div>
      <a href="#trade">${icon('<path d="M15 6a26 26 0 0 1 37 35l6-5M45 48A26 26 0 0 1 7 14l-6 4M22 15l8 11 8-11M20 26h20M20 34h20M30 26v16"/>')}<span>交易</span></a>
      <a href="#post">${icon('<path d="M40 3H11a5 5 0 0 0-5 5v38a5 5 0 0 0 5 5h38a5 5 0 0 0 5-5V20"/><path d="M51 2l3 3-4 5-3-3zM46 9l3 3-22 23-4 1 1-4z" fill="currentColor" stroke-width="2"/>')}<span>发帖</span></a>
      <a href="#tools">${icon('<rect x="8" y="5" width="19" height="20" rx="3"/><rect x="8" y="30" width="19" height="20" rx="3"/><rect x="33" y="30" width="19" height="20" rx="3"/><path d="M42.500 4l11 11-11 11-11-11z" stroke-linejoin="round"/>')}<span>功能</span></a>
      <a href="#add" class="add">${icon('<circle cx="30" cy="27" r="25"/><path d="M30 14v26M17 27h26"/>')}<span>加自选</span></a>`;
  }
});

customElements.define("home-bar", class extends BaseElement {
  css() {
    return `
      :host { padding: 17px 0; }
      div { width: 37%; height: 10px; margin: 0 auto; border-radius: 5px; background: #333; }
    `;
  }
  html() {
    return "<div></div>";
  }
});

customElements.define("stock-page", class extends BaseElement {
  css() {
    return `
      main { display: grid; grid-template-columns: 763fr 317fr; border-top: 1px solid var(--line); border-bottom: 1px solid var(--line); }
      .charts { min-width: 0; }
      .force { font-size: 24px; }
      .force span { font-size: 32px; }
      .queue { display: grid; grid-template-columns: 1fr 1fr; border-bottom: 1px solid var(--line); }
      .queue queue-side + queue-side { border-left: 1px solid #e4e4e6; }
    `;
  }
  html() {
    return `
      <status-bar></status-bar>
      <stock-header></stock-header>
      <quote-summary></quote-summary>
      <notice-bar>龙虎榜：买入总额1.309亿元，卖出总额2.279亿元，...</notice-bar>
      <period-tabs></period-tabs>
      <minute-chips></minute-chips>
      <chart-legend></chart-legend>
      <main>
        <div class="charts">
          <price-chart></price-chart>
          <indicator-head name="成交量"><span>128.1万</span></indicator-head>
          <volume-chart></volume-chart>
          <indicator-head name="主力意愿" narrow><span class="force">多空力度: <span class="green">−81.38</span></span></indicator-head>
          <force-chart></force-chart>
          <time-range></time-range>
        </div>
        <order-book></order-book>
      </main>
      <div class="queue">
        <queue-side name="卖1" price="8.00" qty="38" tone="green" lots="5,5,8,10,10"></queue-side>
        <queue-side name="买1" price="7.99" qty="105" tone="red" lots="97,8"></queue-side>
      </div>
      <bottom-nav></bottom-nav>
      <home-bar></home-bar>`;
  }
});
</script>
</body>
</html>
